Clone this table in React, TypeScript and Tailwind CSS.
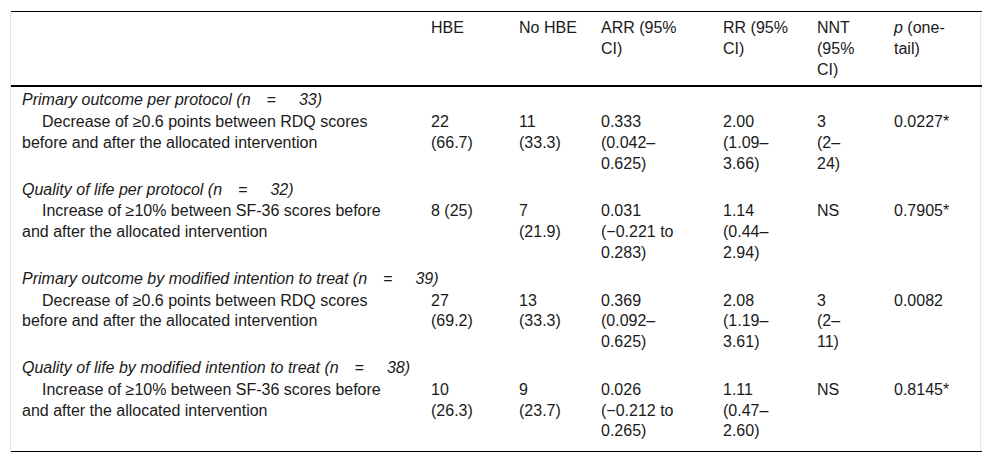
import React from 'react';

type DataRow = {
    label: [string, string];
    cells: string[][];
};

type Section = {
    title: string;
    n: string;
    row: DataRow;
};

const sections: Section[] = [
    {
        title: 'Primary outcome per protocol',
        n: '33',
        row: {
            label: ['Decrease of ≥0.6 points between RDQ scores', 'before and after the allocated intervention'],
            cells: [['22', '(66.7)'], ['11', '(33.3)'], ['0.333', '(0.042–', '0.625)'], ['2.00', '(1.09–', '3.66)'], ['3', '(2–', '24)'], ['0.0227*']],
        },
    },
    {
        title: 'Quality of life per protocol',
        n: '32',
        row: {
            label: ['Increase of ≥10% between SF-36 scores before', 'and after the allocated intervention'],
            cells: [['8 (25)'], ['7', '(21.9)'], ['0.031', '(−0.221 to', '0.283)'], ['1.14', '(0.44–', '2.94)'], ['NS'], ['0.7905*']],
        },
    },
    {
        title: 'Primary outcome by modified intention to treat',
        n: '39',
        row: {
            label: ['Decrease of ≥0.6 points between RDQ scores', 'before and after the allocated intervention'],
            cells: [['27', '(69.2)'], ['13', '(33.3)'], ['0.369', '(0.092–', '0.625)'], ['2.08', '(1.19–', '3.61)'], ['3', '(2–', '11)'], ['0.0082']],
        },
    },
    {
        title: 'Quality of life by modified intention to treat',
        n: '38',
        row: {
            label: ['Increase of ≥10% between SF-36 scores before', 'and after the allocated intervention'],
            cells: [['10', '(26.3)'], ['9', '(23.7)'], ['0.026', '(−0.212 to', '0.265)'], ['1.11', '(0.47–', '2.60)'], ['NS'], ['0.8145*']],
        },
    },
];

const colWidths = ['w-[409px]', 'w-[88px]', 'w-[82px]', 'w-[122px]', 'w-[94px]', 'w-[77px]', 'w-[99px]'];

const Lines: React.FC<{ lines: string[] }> = ({ lines }) => (
    <>
        {lines.map((l, i) => (
            <span key={i} className="block whitespace-nowrap">{l}</span>
        ))}
    </>
);

const App: React.FC = () => {
    return (
        <div className="w-[992px] h-[462px] bg-white pt-[11px] pl-[10px] text-[16px] leading-[20.8px] text-[#1a1a1a]" style={{ fontFamily: '"Liberation Sans", Arial, sans-serif' }}>
            <div className="w-[971px] border-x border-[#e6e6e6]">
                <table className="w-full table-fixed border-collapse">
                    <colgroup>
                        {colWidths.map((w, i) => <col key={i} className={w} />)}
                    </colgroup>
                    <thead>
                        <tr className="border-t border-b-2 border-black">
                            <th className="pl-[11px] pt-[6px] pb-[5px]"></th>
                            <th className="pl-[11px] pt-[6px] pb-[5px] text-left align-top font-normal"><Lines lines={['HBE']} /></th>
                            <th className="pl-[11px] pt-[6px] pb-[5px] text-left align-top font-normal"><Lines lines={['No HBE']} /></th>
                            <th className="pl-[11px] pt-[6px] pb-[5px] text-left align-top font-normal"><Lines lines={['ARR (95%', 'CI)']} /></th>
                            <th className="pl-[11px] pt-[6px] pb-[5px] text-left align-top font-normal"><Lines lines={['RR (95%', 'CI)']} /></th>
                            <th className="pl-[11px] pt-[6px] pb-[5px] text-left align-top font-normal"><Lines lines={['NNT', '(95%', 'CI)']} /></th>
                            <th className="pl-[11px] pt-[6px] pb-[5px] text-left align-top font-normal">
                                <span className="block whitespace-nowrap"><i>p</i> (one-</span>
                                <span className="block whitespace-nowrap">tail)</span>
                            </th>
                        </tr>
                    </thead>
                    <tbody>
                        {sections.map((s, si) => (
                            <React.Fragment key={si}>
                                <tr>
                                    <td colSpan={7} className={`pl-[11px] italic whitespace-nowrap ${si === 0 ? 'pt-[3px]' : 'pt-0'}`}>
                                        {s.title} (n<span className="ml-[16px] mr-[23px]">=</span>{s.n})
                                    </td>
                                </tr>
                                <tr className={si === sections.length - 1 ? 'border-b border-black' : ''}>
                                    <td className={`pl-[11px] pt-[1px] align-top ${si === sections.length - 1 ? 'pb-[9px]' : 'pb-[5px]'}`}>
                                        <span className="block whitespace-nowrap indent-5">{s.row.label[0]}</span>
                                        <span className="block whitespace-nowrap">{s.row.label[1]}</span>
                                    </td>
                                    {s.row.cells.map((c, ci) => (
                                        <td key={ci} className={`pl-[11px] pt-[1px] align-top ${si === sections.length - 1 ? 'pb-[9px]' : 'pb-[5px]'}`}>
                                            <Lines lines={c} />
                                        </td>
                                    ))}
                                </tr>
                            </React.Fragment>
                        ))}
                    </tbody>
                </table>
            </div>
        </div>
    );
};

export default App;
